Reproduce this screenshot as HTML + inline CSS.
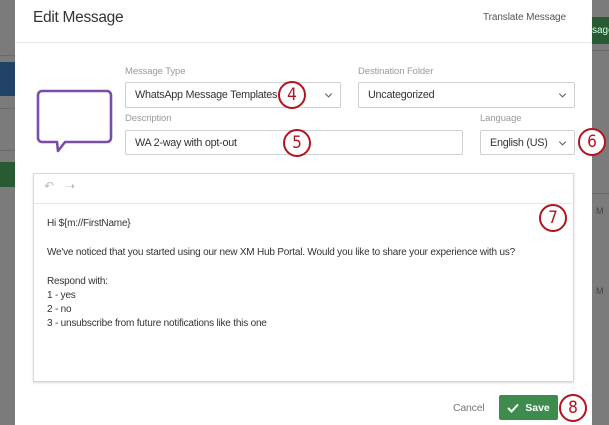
<!DOCTYPE html>
<html><head><style>
body{margin:0;width:609px;height:425px;overflow:hidden;position:relative;background:#7b7b7b;font-family:"Liberation Sans",Arial,sans-serif;}
.abs{position:absolute}
.modal{left:15px;top:0;width:577px;height:425px;background:#fff}
.lbl{font-size:9.5px;color:#9a9a9a;letter-spacing:-0.1px}
.box{border:1px solid #cfcfcf;border-radius:2px;background:#fff;box-sizing:border-box;font-size:10.8px;letter-spacing:-0.25px;color:#333;padding-left:9px;display:flex;align-items:center}
.chev{position:absolute;right:9px;top:50%;width:4px;height:4px;border-right:1px solid #555;border-bottom:1px solid #555;transform:translateY(-70%) rotate(45deg)}
.circ{position:absolute;width:28px;height:28px;border:2px solid #b3141e;border-radius:50%;box-sizing:border-box;background:#fff;color:#b3141e;font-size:17px;display:flex;align-items:center;justify-content:center;font-family:"DejaVu Sans Condensed","Liberation Sans",sans-serif}
.t{position:absolute;left:47px;font-size:10px;letter-spacing:-0.2px;color:#333}
</style></head><body>
<div class="abs" style="left:0;top:55px;width:15px;height:1px;background:#6a6a6a"></div>
<div class="abs" style="left:0;top:62px;width:15px;height:34px;background:#1f4266"></div>
<div class="abs" style="left:0;top:108px;width:15px;height:1px;background:#6a6a6a"></div>
<div class="abs" style="left:0;top:150px;width:15px;height:1px;background:#6a6a6a"></div>
<div class="abs" style="left:0;top:162px;width:15px;height:25px;background:#285a33"></div>
<div class="abs" style="left:592px;top:17px;width:17px;height:27px;background:#285a33;color:#cfd;font-size:10px;line-height:27px;overflow:hidden">sage</div>
<div class="abs" style="left:592px;top:50px;width:17px;height:1px;background:#6a6a6a"></div>
<div class="abs" style="left:592px;top:193px;width:17px;height:1px;background:#6a6a6a"></div>
<div class="abs" style="left:596px;top:206px;font-size:9px;color:#444">M</div>
<div class="abs" style="left:596px;top:286px;font-size:9px;color:#444">M</div>
<div class="abs modal"></div>
<div class="abs" style="left:33px;top:9px;font-size:15.5px;letter-spacing:-0.3px;color:#333">Edit Message</div>
<div class="abs" style="left:483px;top:12px;font-size:10px;letter-spacing:-0.1px;color:#555">Translate Message</div>
<div class="abs" style="left:15px;top:42px;width:577px;height:1px;background:#ececec"></div>
<svg class="abs" style="left:30px;top:85px" width="90" height="72"><path d="M12 6 H77 a4 4 0 0 1 4 4 V53 a4 4 0 0 1 -4 4 H35 L28 66 L27 57 H12 a4 4 0 0 1 -4 -4 V10 a4 4 0 0 1 4 -4 Z" fill="none" stroke="#7a4ea7" stroke-width="2.6" stroke-linejoin="round"/></svg>
<div class="abs lbl" style="left:125px;top:66px">Message Type</div>
<div class="abs lbl" style="left:358px;top:66px">Destination Folder</div>
<div class="abs box" style="left:125px;top:82px;width:216px;height:26px">WhatsApp Message Templates<span class="chev"></span></div>
<div class="abs box" style="left:358px;top:82px;width:217px;height:26px">Uncategorized<span class="chev"></span></div>
<div class="abs lbl" style="left:125px;top:113px">Description</div>
<div class="abs lbl" style="left:480px;top:113px">Language</div>
<div class="abs box" style="left:125px;top:130px;width:338px;height:25px">WA 2-way with opt-out</div>
<div class="abs box" style="left:480px;top:130px;width:95px;height:25px">English (US)<span class="chev"></span></div>
<div class="abs" style="left:33px;top:173px;width:541px;height:209px;border:1px solid #d8d8d8;box-sizing:border-box;box-shadow:0 1px 2px rgba(0,0,0,.15)"></div>
<div class="abs" style="left:34px;top:203px;width:539px;height:1px;background:#e8e8e8"></div>
<div class="abs" style="left:44px;top:179px;font-size:12px;color:#bbb">&#8630;</div>
<div class="abs" style="left:65px;top:179px;font-size:12px;color:#bbb">&#10141;</div>
<div class="t" style="top:218px">Hi ${m://FirstName}</div>
<div class="t" style="top:247px">We've noticed that you started using our new XM Hub Portal. Would you like to share your experience with us?</div>
<div class="t" style="top:276px">Respond with:</div>
<div class="t" style="top:290px">1 - yes</div>
<div class="t" style="top:304px">2 - no</div>
<div class="t" style="top:318px">3 - unsubscribe from future notifications like this one</div>
<div class="abs" style="left:453px;top:402px;font-size:10.5px;letter-spacing:-0.2px;color:#777">Cancel</div>
<div class="abs" style="left:499px;top:395px;width:59px;height:25px;background:#3d8c4e;border-radius:2px;color:#fff;font-size:10.5px;font-weight:bold;display:flex;align-items:center;justify-content:center"><svg width="12" height="10" style="margin-right:6px"><path d="M1 5 L4.5 8.5 L11 1.5" fill="none" stroke="#fff" stroke-width="2"/></svg>Save</div>
<div class="circ" style="left:278px;top:81px">4</div>
<div class="circ" style="left:283px;top:129px">5</div>
<div class="circ" style="left:578px;top:128px">6</div>
<div class="circ" style="left:539px;top:204px">7</div>
<div class="circ" style="left:559px;top:394px">8</div>
</body></html>
